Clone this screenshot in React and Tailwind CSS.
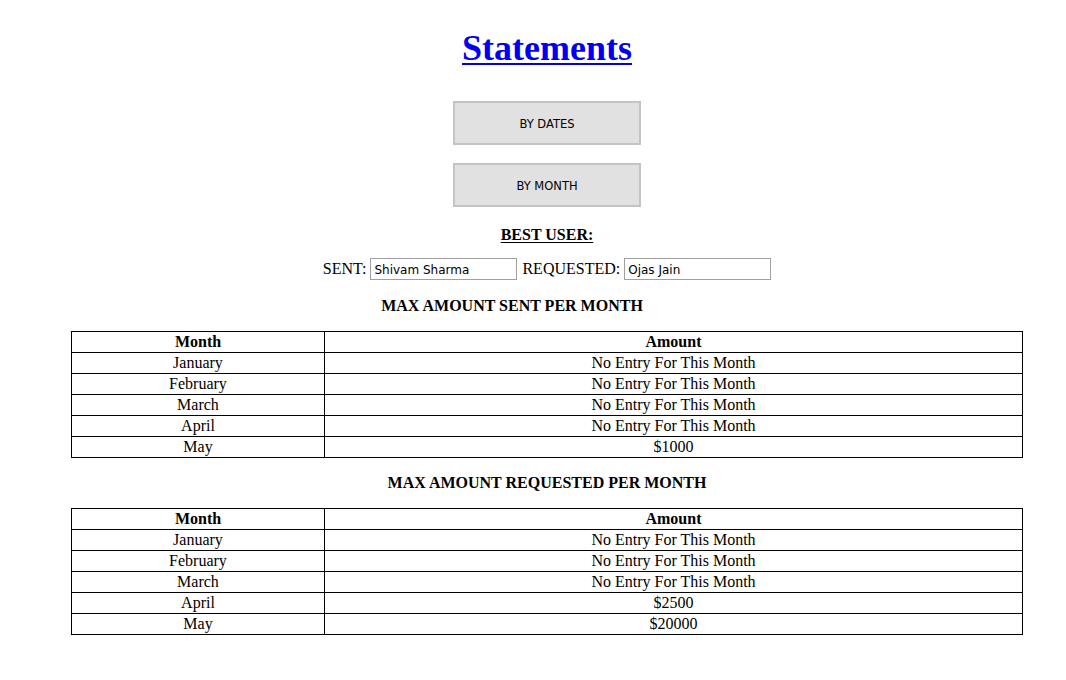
import React from 'react';

const SENT = [
  ['January', 'No Entry For This Month'],
  ['February', 'No Entry For This Month'],
  ['March', 'No Entry For This Month'],
  ['April', 'No Entry For This Month'],
  ['May', '$1000'],
];

const REQUESTED = [
  ['January', 'No Entry For This Month'],
  ['February', 'No Entry For This Month'],
  ['March', 'No Entry For This Month'],
  ['April', '$2500'],
  ['May', '$20000'],
];

function MonthTable({ rows }) {
  return (
    <table className="mx-auto w-[952px] border-collapse border border-black text-[16px] leading-[18px]">
      <thead>
        <tr className="h-[21px]">
          <th className="w-[253px] border border-black p-px font-bold">Month</th>
          <th className="border border-black p-px font-bold">Amount</th>
        </tr>
      </thead>
      <tbody>
        {rows.map(([month, amount]) => (
          <tr key={month} className="h-[21px]">
            <td className="border border-black p-px text-center">{month}</td>
            <td className="border border-black p-px text-center">{amount}</td>
          </tr>
        ))}
      </tbody>
    </table>
  );
}

export default function App() {
  return (
    <div className="min-h-[680px] bg-white pl-[28px] text-black font-['Liberation_Serif',serif]">
      <div className="flex flex-col items-center pt-[28px]">
        <h1 className="text-[36px] leading-[40px] font-bold text-[#0000ee] underline decoration-2 underline-offset-[3px]">
          Statements
        </h1>

        <div className="mt-[33px] flex flex-col items-center gap-[18px]">
          {['BY DATES', 'BY MONTH'].map(label => (
            <button
              key={label}
              className="h-[44px] w-[188px] border-2 border-[#c4c4c4] bg-[#e1e1e1] pt-[3px] text-[11.5px] text-black font-['DejaVu_Sans',sans-serif]"
            >
              {label}
            </button>
          ))}
        </div>

        <p className="mt-[19px] text-[16px] leading-[18px] font-bold underline underline-offset-2">BEST USER:</p>

        <div className="mt-[13px] flex items-center gap-[4px] text-[16px]">
          <span>SENT:</span>
          <input
            readOnly
            value="Shivam Sharma"
            className="h-[22px] w-[147px] border border-[#a0a0a0] px-[3px] pt-[2px] text-[12px] outline-none font-['DejaVu_Sans',sans-serif]"
          />
          <span className="ml-[1px]">REQUESTED:</span>
          <input
            readOnly
            value="Ojas Jain"
            className="h-[22px] w-[147px] border border-[#a0a0a0] px-[3px] pt-[2px] text-[12px] outline-none font-['DejaVu_Sans',sans-serif]"
          />
        </div>

        <h4 className="mt-[16px] pr-[70px] text-[16px] leading-[18px] font-bold">MAX AMOUNT SENT PER MONTH</h4>
      </div>

      <div className="mt-[16px]">
        <MonthTable rows={SENT} />
      </div>

      <h4 className="mt-[16px] text-center text-[16px] leading-[18px] font-bold">MAX AMOUNT REQUESTED PER MONTH</h4>

      <div className="mt-[16px]">
        <MonthTable rows={REQUESTED} />
      </div>
    </div>
  );
}
